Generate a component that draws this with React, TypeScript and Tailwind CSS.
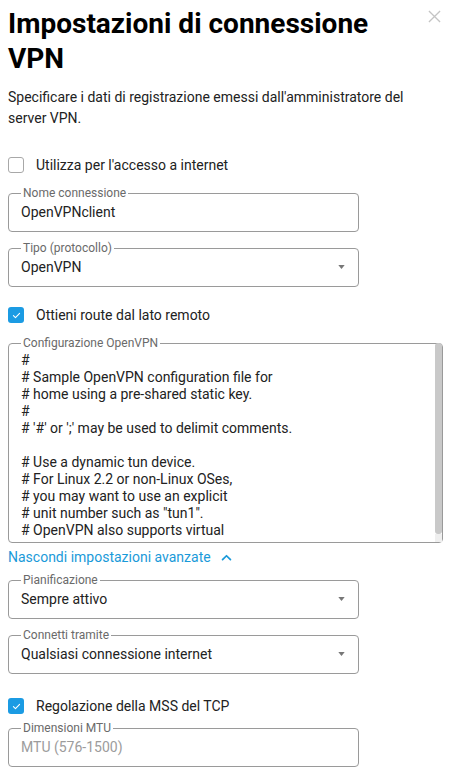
import type { ReactNode } from "react";

const font = { fontFamily: "Roboto, 'Noto Sans', sans-serif" };

const configLines = [
  "#",
  "# Sample OpenVPN configuration file for",
  "# home using a pre-shared static key.",
  "#",
  "# '#' or ';' may be used to delimit comments.",
  "",
  "# Use a dynamic tun device.",
  "# For Linux 2.2 or non-Linux OSes,",
  "# you may want to use an explicit",
  '# unit number such as "tun1".',
  "# OpenVPN also supports virtual",
];

function Checkbox({ checked, label, className = "" }: { checked?: boolean; label: string; className?: string }) {
  return (
    <label className={`flex h-[22px] items-center ${className}`}>
      {checked ? (
        <span className="flex h-4 w-4 items-center justify-center rounded-[3px] bg-[#1b9be3]">
          <svg viewBox="0 0 16 16" className="h-[11px] w-[11px]" fill="none" stroke="white" strokeWidth="1.6" strokeLinecap="round" strokeLinejoin="round">
            <path d="M3.5 8.3l3 2.9 6-6.2" />
          </svg>
        </span>
      ) : (
        <span className="h-4 w-4 rounded-[3px] border border-[#a8a8a8] bg-white" />
      )}
      <span className="ml-[12px] text-[14px] text-[#222]">{label}</span>
    </label>
  );
}

function Field({ label, children, className = "" }: { label: string; children: ReactNode; className?: string }) {
  return (
    <fieldset className={`w-[351px] rounded-[4px] border border-[#9a9a9a] px-[12px] pb-[7px] ${className}`}>
      <legend className="px-[2px] text-[12px] leading-[14px] text-[#6a6a6a]">{label}</legend>
      {children}
    </fieldset>
  );
}

function SelectField({ label, value, className = "" }: { label: string; value: string; className?: string }) {
  return (
    <Field label={label} className={className}>
      <div className="flex h-[24px] items-center justify-between">
        <span className="text-[14px] text-[#222]">{value}</span>
        <svg viewBox="0 0 8 5" className="mr-[1px] h-[4px] w-[7px]">
          <path d="M0 0h8L4 5z" fill="#777" />
        </svg>
      </div>
    </Field>
  );
}

export default function App() {
  return (
    <div className="min-h-[782px] bg-white px-[8px] pt-[6px]" style={font}>
      <div className="flex items-start justify-between">
        <h1 className="text-[28px] font-bold leading-[35px] text-black">
          Impostazioni di connessione
          <br />
          VPN
        </h1>
        <svg viewBox="0 0 14 14" className="mr-[3px] mt-[4px] h-[13px] w-[13px] shrink-0" stroke="#c4c4c4" strokeWidth="1.4">
          <path d="M1 1l12 12M13 1L1 13" />
        </svg>
      </div>
      <p className="mt-[11px] text-[14px] leading-[21px] text-[#222]">
        Specificare i dati di registrazione emessi dall'amministratore del server VPN.
      </p>

      <Checkbox label="Utilizza per l'accesso a internet" className="mt-[25px]" />

      <Field label="Nome connessione" className="mt-[10px]">
        <div className="flex h-[24px] items-center text-[14px] text-[#222]">OpenVPNclient</div>
      </Field>

      <SelectField label="Tipo (protocollo)" value="OpenVPN" className="mt-[9px]" />

      <Checkbox checked label="Ottieni route dal lato remoto" className="mt-[17px]" />

      <fieldset className="mt-[10px] w-[435px] rounded-[4px] border border-[#9a9a9a] pl-[12px]">
        <legend className="px-[2px] text-[12px] leading-[14px] text-[#6a6a6a]">Configurazione OpenVPN</legend>
        <div className="flex h-[192px]">
          <div className="flex-1 overflow-hidden pt-[2px] text-[14px] leading-[17px] text-[#222]">
            {configLines.map((line, i) => (
              <div key={i} className="h-[17px] whitespace-pre">
                {line}
              </div>
            ))}
          </div>
          <div className="-mt-[7px] flex w-[7px] flex-col">
            <div className="flex-1 rounded-[3px] bg-[#c9c9c9]" />
            <div className="h-[8px] bg-[#efefef]" />
          </div>
        </div>
      </fieldset>

      <button className="mt-[3px] flex h-[22px] items-center text-[14px] leading-[22px] text-[#1a9ad9]">
        Nascondi impostazioni avanzate
        <svg viewBox="0 0 12 8" className="ml-[10px] h-[7px] w-[11px]" fill="none" stroke="#1a9ad9" strokeWidth="2" strokeLinecap="round" strokeLinejoin="round">
          <path d="M1.5 6.5L6 2l4.5 4.5" />
        </svg>
      </button>

      <SelectField label="Pianificazione" value="Sempre attivo" className="mt-[5px]" />
      <SelectField label="Connetti tramite" value="Qualsiasi connessione internet" className="mt-[9px]" />

      <Checkbox checked label="Regolazione della MSS del TCP" className="mt-[21px]" />

      <Field label="Dimensioni MTU" className="mt-[4px]">
        <div className="flex h-[24px] items-center text-[14px] text-[#9c9c9c]">MTU (576-1500)</div>
      </Field>
    </div>
  );
}
